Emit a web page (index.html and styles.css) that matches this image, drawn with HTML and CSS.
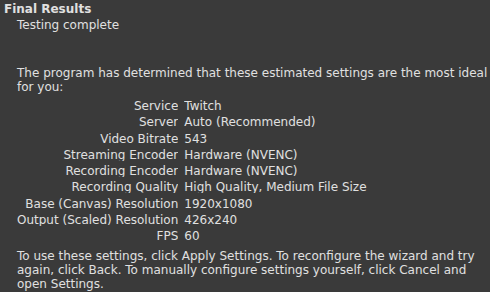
FILE: index.html
```html
<!DOCTYPE html>
<html lang="en">
<head>
    <meta charset="UTF-8">
    <meta name="viewport" content="width=device-width, initial-scale=1.0">
    <title>Final Results</title>
    <link rel="stylesheet" href="styles.css">
</head>
<body>
    <div class="page">
        <div class="page-title">Final Results</div>
        <div class="page-body">
            <div class="status">Testing complete</div>

            <p class="intro">The program has determined that these estimated settings are the most ideal for you:</p>

            <div class="results">
                <div class="label">Service</div>
                <div class="value">Twitch</div>
                <div class="label">Server</div>
                <div class="value">Auto (Recommended)</div>
                <div class="label">Video Bitrate</div>
                <div class="value">543</div>
                <div class="label">Streaming Encoder</div>
                <div class="value">Hardware (NVENC)</div>
                <div class="label">Recording Encoder</div>
                <div class="value">Hardware (NVENC)</div>
                <div class="label">Recording Quality</div>
                <div class="value">High Quality, Medium File Size</div>
                <div class="label">Base (Canvas) Resolution</div>
                <div class="value">1920x1080</div>
                <div class="label">Output (Scaled) Resolution</div>
                <div class="value">426x240</div>
                <div class="label">FPS</div>
                <div class="value">60</div>
            </div>

            <p class="outro">To use these settings, click Apply Settings. To reconfigure the wizard and try again, click Back. To manually configure settings yourself, click Cancel and open Settings.</p>
        </div>
    </div>
</body>
</html>
```

FILE: styles.css
```css
html, body {
    height: 100%;
}

body {
    margin: 0;
    background-color: #3a3a3a;
    color: #e0e0e0;
    font-family: "DejaVu Sans", sans-serif;
    font-size: 12px;
    line-height: 14px;
}

.page {
    padding: 2px 0 0 4px;
}

.page-title {
    font-weight: bold;
}

.page-body {
    margin-left: 13px;
}

.status {
    margin-top: 2px;
}

.intro {
    margin: 34px 0 0 0;
}

.results {
    display: grid;
    grid-template-columns: max-content 1fr;
    column-gap: 6px;
    row-gap: 3.25px;
    margin-top: 5px;
}

.label,
.value {
    height: 13px;
    overflow: hidden;
    white-space: nowrap;
}

.label {
    text-align: right;
}

.outro {
    margin: 7px 0 0 0;
}
```
